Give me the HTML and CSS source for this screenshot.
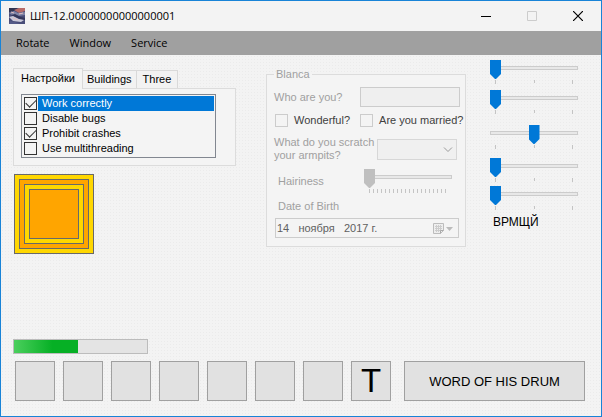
FILE: index.html
```
<!DOCTYPE html>
<html lang="ru">
<head>
<meta charset="utf-8">
<title>ШП-12.00000000000000001</title>
<link rel="stylesheet" href="styles.css">
</head>
<body>
<div class="window">
  <header class="titlebar">
    <svg class="app-icon" width="16" height="16" viewBox="0 0 16 16" aria-hidden="true">
      <rect width="16" height="16" fill="#494d78"/>
      <path d="M0 0h9L5 3 0 4z" fill="#303552"/>
      <path d="M5 2l5-2h6v3l-6 2z" fill="#b66b68"/>
      <path d="M0 5l5-2 4 2 7-1v3L9 8 3 7z" fill="#8085a6"/>
      <path d="M2 7l4-1 6 3 4 1v2l-7-1z" fill="#34375b"/>
      <path d="M0 9l4-1 6 3 5 1-3 2-8-1z" fill="#c8c8d8"/>
      <path d="M1 13l5 1 5 2H0z" fill="#555b88"/>
      <path d="M4 10l5 2M2 4l3 1M10 6l4-1" stroke="#e0bfc0" fill="none"/>
    </svg>
    <h1 class="title">ШП-12.00000000000000001</h1>
    <div class="window-controls">
      <button type="button" aria-label="Minimize"><svg width="10" height="10" viewBox="0 0 10 10"><path d="M0 5.5h10" stroke="#000"/></svg></button>
      <button type="button" aria-label="Maximize" disabled><svg width="10" height="10" viewBox="0 0 10 10"><path d="M.5.5h9v9h-9z" stroke="#ccc" fill="none"/></svg></button>
      <button type="button" aria-label="Close"><svg width="10" height="10" viewBox="0 0 10 10"><path d="M0 0l10 10M10 0L0 10" stroke="#000" stroke-width="1.2"/></svg></button>
    </div>
  </header>
  <nav class="menubar">
    <button type="button">Rotate</button>
    <button type="button">Window</button>
    <button type="button">Service</button>
  </nav>
  <main class="client">
    <div class="columns">
      <section class="left">
        <div class="tabs" role="tablist">
          <button class="tab active" type="button" role="tab" aria-selected="true">Настройки</button>
          <button class="tab" type="button" role="tab">Buildings</button>
          <button class="tab" type="button" role="tab">Three</button>
        </div>
        <div class="tab-page" role="tabpanel">
          <div class="checklist">
            <label class="item selected"><input type="checkbox" checked><span>Work correctly</span></label>
            <label class="item"><input type="checkbox"><span>Disable bugs</span></label>
            <label class="item"><input type="checkbox" checked><span>Prohibit crashes</span></label>
            <label class="item"><input type="checkbox"><span>Use multithreading</span></label>
          </div>
        </div>
        <svg class="squares" width="80" height="80" viewBox="0 0 80 80" stroke="#696969" aria-hidden="true">
          <rect x=".5" y=".5" width="79" height="79" fill="#ffd700"/>
          <rect x="5.5" y="5.5" width="69" height="69" fill="#ffa500"/>
          <rect x="10.5" y="10.5" width="59" height="59" fill="#ffd700"/>
          <rect x="15.5" y="15.5" width="49" height="49" fill="#ffa500"/>
        </svg>
      </section>
      <fieldset class="group" disabled>
        <legend>Blanca</legend>
        <div class="row row-name">
          <label for="who">Who are you?</label>
          <input class="textbox" id="who" type="text">
        </div>
        <div class="row row-checks">
          <label class="check"><input type="checkbox"><span>Wonderful?</span></label>
          <label class="check"><input type="checkbox"><span>Are you married?</span></label>
        </div>
        <div class="row row-scratch">
          <label for="scratch">What do you scratch your armpits?</label>
          <div class="combo">
            <select id="scratch"><option></option></select>
            <svg class="chevron" width="10" height="6" viewBox="0 0 10 6" aria-hidden="true"><path d="M1 .5l4 4 4-4" stroke="#999" fill="none"/></svg>
          </div>
        </div>
        <div class="row row-hair">
          <label for="hair">Hairiness</label>
          <div class="slider fine"><input id="hair" type="range" min="0" max="20" value="0"><svg class="ticks" viewBox="0 0 88 4" aria-hidden="true"><path d="M5 2H84" stroke="#c4c4c4" stroke-width="4" stroke-dasharray="1 3"/></svg></div>
        </div>
        <label class="birth-label" for="birth">Date of Birth</label>
        <div class="datebox">
          <input id="birth" type="text" value="14   ноября   2017 г.">
          <svg width="20" height="13" viewBox="0 0 20 13" aria-hidden="true">
            <path d="M.5 1.5h10v7l-3 3h-7z" fill="#eee" stroke="#bcbcbc"/>
            <path d="M2 4.5h7M2 6.5h7M2 8.5h6M3.5 3v7M5.5 3v7M7.5 3v7" stroke="#ccc"/>
            <path d="M7.5 11.5v-3h3" fill="none" stroke="#aaa"/>
            <path d="M13 5h7l-3.5 4z" fill="#bbb"/>
          </svg>
        </div>
      </fieldset>
      <section class="right">
        <div class="slider"><input type="range" min="0" max="2" value="0" aria-label="1"><svg class="ticks" viewBox="0 0 88 4"><path d="M5.5 0v4M44.5 0v3M82.5 0v4" stroke="#c4c4c4"/></svg></div>
        <div class="slider"><input type="range" min="0" max="2" value="0" aria-label="2"><svg class="ticks" viewBox="0 0 88 4"><path d="M5.5 0v4M44.5 0v3M82.5 0v4" stroke="#c4c4c4"/></svg></div>
        <div class="slider"><input type="range" min="0" max="2" value="1" aria-label="3"><svg class="ticks" viewBox="0 0 88 4"><path d="M5.5 0v4M44.5 0v3M82.5 0v4" stroke="#c4c4c4"/></svg></div>
        <div class="slider"><input type="range" min="0" max="2" value="0" aria-label="4"><svg class="ticks" viewBox="0 0 88 4"><path d="M5.5 0v4M44.5 0v3M82.5 0v4" stroke="#c4c4c4"/></svg></div>
        <div class="slider"><input type="range" min="0" max="2" value="0" aria-label="5"><svg class="ticks" viewBox="0 0 88 4"><path d="M5.5 0v4M44.5 0v3M82.5 0v4" stroke="#c4c4c4"/></svg></div>
        <p class="caption">ВРМЩЙ</p>
      </section>
    </div>
    <footer class="bottom">
      <div class="progress" role="progressbar" aria-valuenow="48"><div class="bar" style="width: 48%"></div></div>
      <div class="buttons">
        <button class="tile" type="button"></button>
        <button class="tile" type="button"></button>
        <button class="tile" type="button"></button>
        <button class="tile" type="button"></button>
        <button class="tile" type="button"></button>
        <button class="tile" type="button"></button>
        <button class="tile" type="button"></button>
        <button class="tile" type="button">T</button>
        <button class="drum" type="button">WORD OF HIS DRUM</button>
      </div>
    </footer>
  </main>
</div>
</body>
</html>
```
FILE: styles.css
```
* { box-sizing: border-box; }

body {
  margin: 0;
  font: 11px/15px "Liberation Sans", Arial, sans-serif;
  color: #000;
}

button, input, select { font: inherit; color: inherit; margin: 0; }
button { padding: 0; border: 0; background: none; }

.window {
  display: flex;
  flex-direction: column;
  min-height: 100vh;
  border: 1px solid #1883d7;
  background: #f2f2f2;
}

.titlebar {
  display: flex;
  align-items: center;
  height: 30px;
  padding-left: 8px;
  background: #f3f3f3;
}
.title {
  flex: 1;
  margin: 0 0 0 5px;
  font: 11px/16px "Open Sans", "Noto Sans", sans-serif;
}
.window-controls { display: flex; }
.window-controls button {
  display: grid;
  place-items: center;
  width: 46px;
  height: 28px;
}

.menubar {
  display: flex;
  gap: 20px;
  height: 24px;
  padding: 0 15px;
  background: #a0a0a0;
  font: 11px/24px "Open Sans", "Noto Sans", sans-serif;
}

.client {
  flex: 1;
  display: flex;
  flex-direction: column;
  justify-content: space-between;
  padding: 5px 16px 15px 12px;
  background-color: #f3f3f3;
  background-image: radial-gradient(#ebebeb 1px, transparent 1px);
  background-size: 3px 3px;
}
.columns {
  display: grid;
  grid-template-columns: 223px 200px 88px;
  column-gap: 30px;
  align-items: start;
}

.left { padding-top: 8px; }
.tabs { display: flex; align-items: flex-end; }
.tab {
  height: 18px;
  padding: 0 5px;
  border: 1px solid #d9d9d9;
  border-width: 1px 1px 0 0;
  background: #f2f2f2;
}
.tab:nth-child(n+2) { padding: 0 4px; }
.tab:last-child { padding: 0 6px; }
.tab.active {
  height: 21px;
  margin-bottom: -1px;
  padding: 0 7px 2px;
  border-left-width: 1px;
  background: #f4f4f4;
}
.tab-page {
  padding: 5px 19px 7px 7px;
  border: 1px solid #dcdcdc;
  background: #f4f4f4;
}
.checklist {
  padding: 1px 1px 1px 2px;
  border: 1px solid #828790;
  background: #f4f4f4;
}
.item { display: flex; align-items: center; gap: 1px; height: 15px; }
.item span { flex: 1; padding-left: 4px; }
.item.selected span { background: #0078d7; color: #fff; }

input[type="checkbox"] {
  appearance: none;
  flex: none;
  width: 13px;
  height: 13px;
  border: 1px solid #333;
}
input[type="checkbox"]:checked::before {
  content: "";
  display: block;
  width: 9px;
  height: 5px;
  margin: 1px;
  border: solid #333;
  border-width: 0 0 1px 1px;
  transform: rotate(-45deg);
}
.squares { display: block; margin: 8px 1px; }

.group {
  min-width: 0;
  margin: 8px 0 0;
  padding: 7px 5px 8px 7px;
  border: 1px solid #dcdcdc;
  background: #f4f4f4;
  color: #a0a0a0;
}
.group legend { padding: 0 2px; line-height: 12px; }
.row { display: flex; justify-content: space-between; align-items: center; }
.textbox {
  width: 100px;
  height: 20px;
  border: 1px solid #ccc;
  background: #efefef;
}
.row-checks { justify-content: flex-start; gap: 10px; margin-top: 6px; padding-left: 1px; }
.check { display: flex; align-items: center; gap: 6px; color: #404040; white-space: nowrap; }
.check input[type="checkbox"] { border-color: #ccc; }
.row-scratch { margin-top: 8px; line-height: 13px; padding-right: 3px; }
.row-scratch label { width: 102px; }
.combo { position: relative; width: 80px; }
.combo select {
  appearance: none;
  display: block;
  width: 100%;
  height: 21px;
  border: 1px solid #ccc;
  background: #efefef;
}
.chevron { position: absolute; right: 4px; top: 8px; }
.row-hair { margin-top: 7px; padding: 0 8px 0 4px; }
.row-hair .slider { width: 88px; }
.birth-label { display: block; margin: 6px 0 0 4px; }
.datebox {
  display: flex;
  align-items: center;
  height: 20px;
  margin: 4px 1px 0;
  padding: 0 5px 0 1px;
  border: 1px solid #ccc;
}
.datebox input {
  flex: 1;
  min-width: 0;
  padding: 0;
  border: 0;
  background: none;
  color: #606060;
}

.right {
  display: grid;
  grid-template-rows: 30px 35px 33px 28px 29px auto;
  margin-left: -6px;
  margin-right: 6px;
}
.slider { height: 24px; }
.slider input {
  appearance: none;
  display: block;
  width: 100%;
  height: 19px;
  background:
    linear-gradient(#e8e8e8, #e8e8e8) 1px 7px / calc(100% - 2px) 2px no-repeat,
    linear-gradient(#ccc, #ccc) 0 6px / 100% 4px no-repeat;
}
.slider input::-webkit-slider-thumb {
  appearance: none;
  width: 11px;
  height: 19px;
  background: #0078d7;
  clip-path: polygon(0 0, 100% 0, 100% 14px, 6px 100%, 5px 100%, 0 14px);
}
.slider.fine input::-webkit-slider-thumb { background: #bfbfbf; }
.ticks { display: block; width: 100%; height: 4px; margin-top: 1px; }
.caption { margin: 0 3px; font-size: 12px; }

.progress {
  width: 135px;
  height: 15px;
  border: 1px solid #bcbcbc;
  background: #e4e4e4;
}
.bar { height: 100%; background: linear-gradient(90deg, #4bcf5d, #06b025 60%); }
.buttons { display: flex; align-items: center; gap: 8px; margin-top: 7px; padding-left: 2px; }
.tile, .drum { height: 40px; border: 1px solid #a0a0a0; background: #e1e1e1; }
.tile { flex: none; width: 40px; font-size: 33px; line-height: 38px; }
.drum { flex: 1; margin-left: 5px; font-size: 13px; }
```
